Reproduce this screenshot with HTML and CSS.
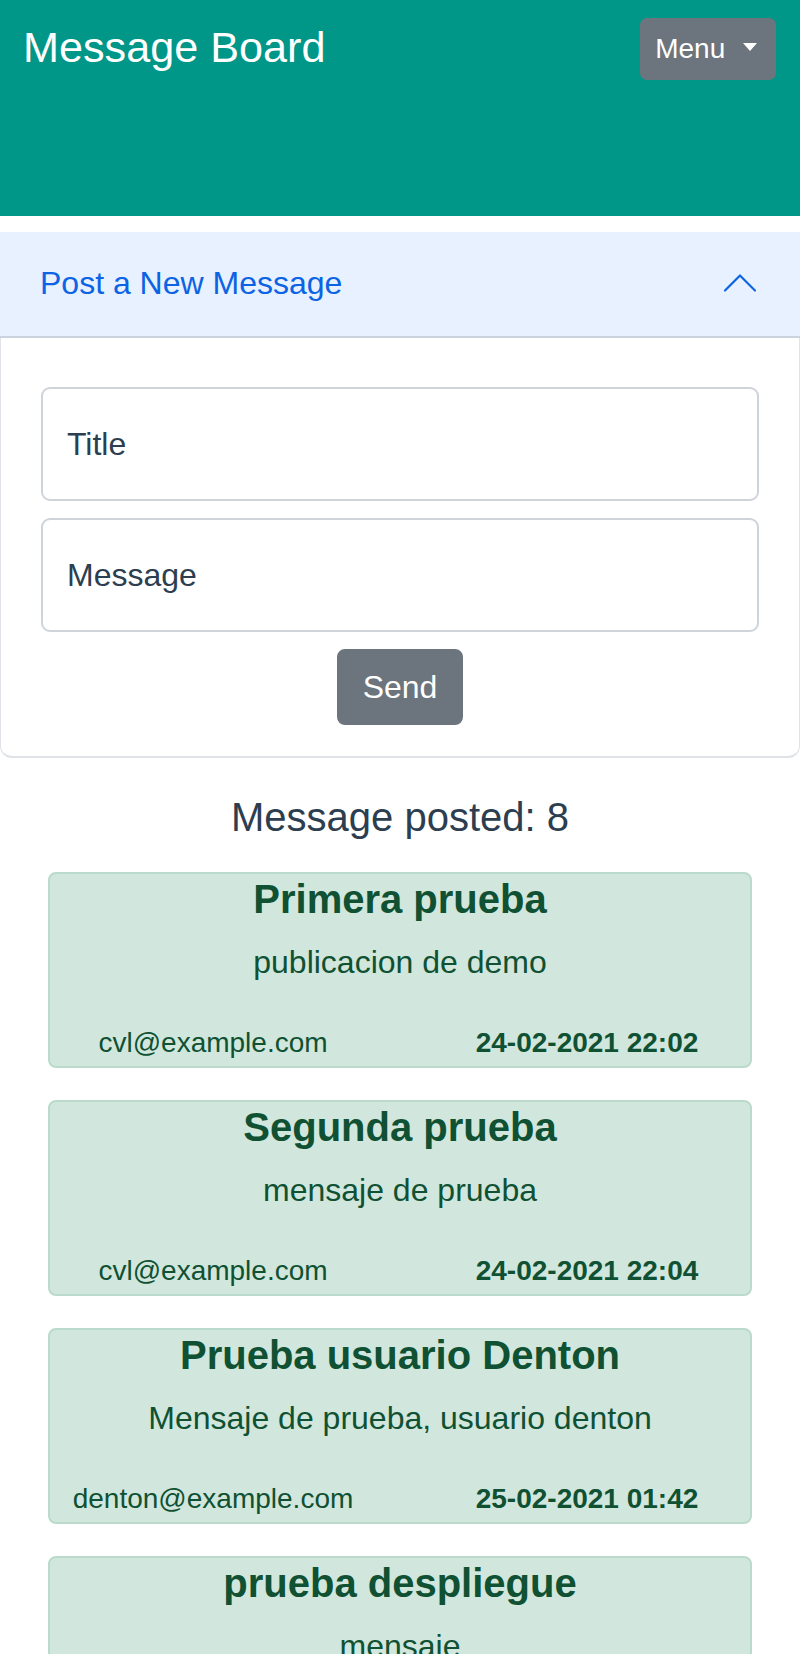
FILE: index.html
```html
<!DOCTYPE html>
<html lang="es">
<head>
<meta charset="utf-8">
<title>Message Board</title>
<link rel="stylesheet" href="styles.css">
</head>
<body>
<div class="app">
  <header class="topbar">
    <h1 class="brand">Message Board</h1>
    <button class="menu-btn" type="button">Menu <span class="caret"></span></button>
  </header>

  <section class="composer">
    <div class="composer-head">
      <span class="composer-title">Post a New Message</span>
      <svg class="chevron" viewBox="0 0 16 16" width="40" height="40" aria-hidden="true">
        <polyline points="2,11 8,5 14,11" fill="none" stroke="#0c63e4" stroke-width="0.85" stroke-linecap="round" stroke-linejoin="round"/>
      </svg>
    </div>
    <div class="composer-body">
      <form class="post-form">
        <input class="field" type="text" placeholder="Title">
        <input class="field" type="text" placeholder="Message">
        <button class="send" type="button">Send</button>
      </form>
    </div>
  </section>

  <h2 class="count">Message posted: 8</h2>

  <div class="messages">
    <article class="msg">
      <h3 class="msg-title">Primera prueba</h3>
      <p class="msg-body">publicacion de demo</p>
      <div class="msg-foot"><small>cvl@example.com</small><small class="date">24-02-2021 22:02</small></div>
    </article>
    <article class="msg">
      <h3 class="msg-title">Segunda prueba</h3>
      <p class="msg-body">mensaje de prueba</p>
      <div class="msg-foot"><small>cvl@example.com</small><small class="date">24-02-2021 22:04</small></div>
    </article>
    <article class="msg">
      <h3 class="msg-title">Prueba usuario Denton</h3>
      <p class="msg-body">Mensaje de prueba, usuario denton</p>
      <div class="msg-foot"><small>denton@example.com</small><small class="date">25-02-2021 01:42</small></div>
    </article>
    <article class="msg">
      <h3 class="msg-title">prueba despliegue</h3>
      <p class="msg-body">mensaje</p>
      <div class="msg-foot"><small>cvl@example.com</small><small class="date">25-02-2021 10:15</small></div>
    </article>
  </div>
</div>
</body>
</html>
```

FILE: styles.css
```css
* { box-sizing: border-box; }

html, body {
  margin: 0;
  padding: 0;
  background: #ffffff;
}

.app {
  font-family: "Liberation Sans", Arial, Helvetica, sans-serif;
  color: #2c3e50;
  text-align: center;
}

/* Top bar */
.topbar {
  background: #009688;
  height: 216px;
  display: flex;
  justify-content: space-between;
  align-items: flex-start;
  padding: 18px 24px 0 23px;
}

.brand {
  margin: 4px 0 0 0;
  font-weight: 400;
  font-size: 43.2px;
  line-height: 51px;
  color: #ffffff;
}

.menu-btn {
  font-family: inherit;
  font-size: 28px;
  line-height: 42px;
  color: #ffffff;
  background: #6c757d;
  border: 2px solid #6c757d;
  border-radius: 7px;
  padding: 8px 17px 8px 13px;
  margin: 0;
  white-space: nowrap;
}

.caret {
  display: inline-block;
  margin-left: 10px;
  vertical-align: 7px;
  border-top: 8px solid #ffffff;
  border-left: 7px solid transparent;
  border-right: 7px solid transparent;
}

/* Composer accordion */
.composer {
  margin-top: 16px;
}

.composer-head {
  display: flex;
  align-items: center;
  justify-content: space-between;
  background: #e7f1ff;
  padding: 26px 40px 30px 40px;
  box-shadow: inset 0 -2px 0 #cbd3de;
  height: 106px;
}

.composer-title {
  font-size: 32px;
  line-height: 48px;
  color: #0c63e4;
}

.chevron {
  display: block;
  flex: none;
}

.composer-body {
  padding: 49px 40px 31px 40px;
  border: 1px solid #e0e3e7;
  border-top: 0;
  border-bottom: 2px solid #dfe2e6;
  border-radius: 0 0 12px 12px;
}

.post-form {
  display: flex;
  flex-direction: column;
  align-items: center;
}

.field {
  display: block;
  width: 100%;
  height: 114px;
  margin: 0 0 17px 0;
  padding: 0 24px;
  font-family: inherit;
  font-size: 32px;
  line-height: 48px;
  color: #2c3e50;
  background: #ffffff;
  border: 2px solid #ced4da;
  border-radius: 9px;
}

.field::placeholder {
  color: #2c3e50;
  opacity: 1;
}

.send {
  font-family: inherit;
  font-size: 32px;
  line-height: 48px;
  color: #ffffff;
  background: #6c757d;
  border: 2px solid #6c757d;
  border-radius: 8px;
  padding: 12px 24px;
  margin: 0;
}

/* Count */
.count {
  margin: 35px 0 31px 0;
  font-weight: 400;
  font-size: 40px;
  line-height: 48px;
}

/* Messages */
.messages {
  margin: 0 48px;
}

.msg {
  background: #d1e7dd;
  border: 2px solid #badbcc;
  border-radius: 8px;
  color: #0f5132;
  margin-bottom: 32px;
  padding: 2px 0 0 0;
}

.msg-title {
  margin: 0 0 16px 0;
  font-size: 40px;
  line-height: 46px;
  font-weight: 700;
}

.msg-body {
  margin: 0 0 33px 0;
  font-size: 32px;
  line-height: 48px;
}

.msg-foot {
  display: grid;
  grid-template-columns: 1fr 1fr;
  margin: 0 -24px;
  font-size: 32px;
  line-height: 47px;
}

.msg-foot small {
  font-size: 28px;
}

.msg-foot .date {
  font-weight: 700;
}
```
